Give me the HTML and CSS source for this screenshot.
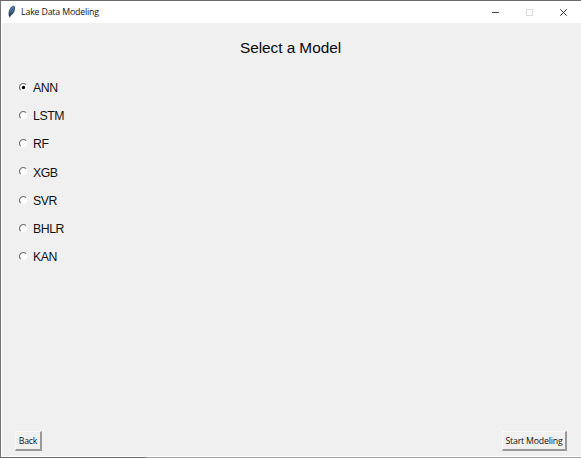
FILE: index.html
```html
<!DOCTYPE html>
<html lang="en">
<head>
<meta charset="utf-8">
<title>Lake Data Modeling</title>
<link rel="stylesheet" href="styles.css">
</head>
<body>
<svg width="0" height="0" class="defs">
  <symbol id="radio" viewBox="0 0 9 9"><circle cx="4.5" cy="4.5" r="3.7" fill="#fff"/><path d="M1.6 7A3.7 3.7 0 0 1 7 1.7" fill="none" stroke="#707070" stroke-width="1.1"/></symbol>
</svg>
<div class="window">
  <header class="titlebar">
    <svg class="feather" width="8" height="13" viewBox="0 0 8 13"><path d="M.8 11C-.1 7 1.6 1.5 6.2.4 8 3 6.9 8 3.2 10.2L2.2 11.8z" fill="#3d4d5b"/><path d="M1.8 8.5C1.6 5.5 3 2.2 5.9 1.2 6.5 4.5 4.8 7.6 1.8 8.5z" fill="#4b88c0"/><path d="M1.6 12.4C1.8 9.5 3 6 4.8 3.5" fill="none" stroke="#26323c" stroke-width=".7"/></svg>
    <h1 class="caption">Lake Data Modeling</h1>
    <div class="controls">
      <svg width="34" height="21" viewBox="0 0 34 21"><path d="M13 10.5h7" stroke="#444"/></svg>
      <svg width="34" height="21" viewBox="0 0 34 21"><rect x="13.5" y="7.5" width="6" height="6" fill="none" stroke="#dadada"/></svg>
      <svg width="34" height="21" viewBox="0 0 34 21"><path d="M13.3 7.3l6.4 6.4M19.7 7.3l-6.4 6.4" stroke="#333"/></svg>
    </div>
  </header>
  <main class="content">
    <h2 class="heading">Select a Model</h2>
    <div class="models">
      <label class="model"><svg class="radio"><use href="#radio"/><circle cx="4.5" cy="4.5" r="1.7"/></svg><span class="name">ANN</span></label>
      <label class="model"><svg class="radio"><use href="#radio"/></svg><span class="name">LSTM</span></label>
      <label class="model"><svg class="radio"><use href="#radio"/></svg><span class="name">RF</span></label>
      <label class="model"><svg class="radio"><use href="#radio"/></svg><span class="name">XGB</span></label>
      <label class="model"><svg class="radio"><use href="#radio"/></svg><span class="name">SVR</span></label>
      <label class="model"><svg class="radio"><use href="#radio"/></svg><span class="name">BHLR</span></label>
      <label class="model"><svg class="radio"><use href="#radio"/></svg><span class="name">KAN</span></label>
    </div>
    <footer class="actions">
      <button class="button back">Back</button>
      <button class="button start">Start Modeling</button>
    </footer>
  </main>
  <div class="edge"></div>
</div>
</body>
</html>
```
FILE: styles.css
```css
* { box-sizing: border-box; }
body { margin: 0; }
.defs { display: block; }
.window {
  display: flex;
  flex-direction: column;
  width: 581px;
  height: 458px;
  border-top: 1px solid #6b696b;
  border-left: 1px solid #747274;
  background: #fff;
  overflow: hidden;
}
.titlebar {
  display: flex;
  align-items: center;
  height: 22px;
  padding-left: 7px;
  background: #fff;
}
.feather { margin-bottom: 2px; }
.caption {
  margin: 0 0 0 5px;
  font: 400 8.75px/21px "Open Sans", sans-serif;
  letter-spacing: -0.15px;
  color: #111;
  white-space: nowrap;
}
.controls { display: flex; margin-left: auto; }
.content {
  display: flex;
  flex-direction: column;
  height: 433px;
  margin-left: 1px;
  background: #f0f0f0;
}
.heading {
  margin: 14px 2px 0 0;
  font: 400 15.4px/22px "Liberation Sans", sans-serif;
  letter-spacing: -0.05px;
  text-align: center;
  color: #080808;
}
.models { margin-top: 14px; padding-left: 16.5px; }
.model {
  display: flex;
  align-items: center;
  height: 28.25px;
  gap: 5.5px;
}
.name {
  padding-top: 1.5px;
  font: 400 12.3px/20px "Liberation Sans", sans-serif;
  letter-spacing: -0.45px;
  color: #111;
}
.radio { display: block; width: 9px; height: 9px; }
.actions {
  display: flex;
  justify-content: space-between;
  margin-top: auto;
  padding: 0 14px 5px 13px;
}
.button {
  height: 20px;
  padding: 0;
  border: solid;
  border-width: 1px 2px 2px 1px;
  border-color: #fafafa #999 #999 #fafafa;
  background: #f0f0f0;
  font: 400 8.75px/16px "Open Sans", sans-serif;
  letter-spacing: -0.18px;
  color: #111;
  white-space: nowrap;
}
.back { width: 27px; }
.start { width: 65px; }
.edge {
  height: 1px;
  margin: 1px 0 0 -1px;
  background: linear-gradient(to right, #6b696b 146px, #a2a2a2 146px);
}
```
